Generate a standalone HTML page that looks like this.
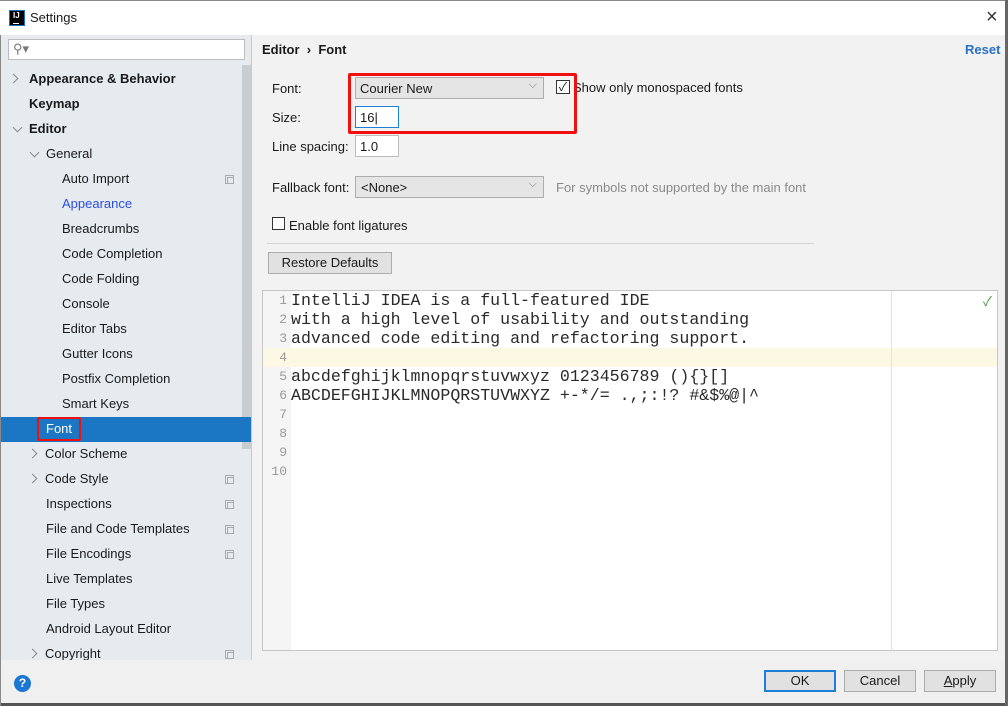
<!DOCTYPE html>
<html><head><style>
*{margin:0;padding:0;box-sizing:border-box}
body{width:1008px;height:706px;overflow:hidden;background:#fff;font-family:"Liberation Sans","Noto Sans CJK SC",sans-serif;font-size:13px;color:#1a1a1a;position:relative}
.a{position:absolute}
.title{left:0;top:0;width:1008px;height:35px;background:#fff;border-top:1px solid #888}
.left{left:0;top:35px;width:251px;height:625px;background:#e6ebf0;border-left:1px solid #888}
.right{left:251px;top:35px;width:757px;height:625px;background:#f2f2f2;border-left:1px solid #c9c9c9}
.bottom{left:0;top:660px;width:1008px;height:46px;background:#f0f0f0;border-left:1px solid #888}
.row{position:absolute;height:25px;line-height:25px;white-space:nowrap}
.arr{position:absolute;width:7px;height:7px;border-right:1.5px solid #8a8a8a;border-bottom:1.5px solid #8a8a8a}
.cp{position:absolute;left:225px;width:9px;height:9px;border:1px solid #aaa}
.cp:after{content:"";position:absolute;left:1px;top:1px;width:5px;height:5px;border:1px solid #aaa;background:#e6ebf0}
.btn{position:absolute;height:22px;border:1px solid #adadad;background:#e1e1e1;text-align:center;line-height:20px}
.mono{font-family:"Liberation Mono",monospace;font-size:16.6px;color:#2a2a2a}
.ln{position:absolute;left:263px;width:24px;text-align:right;color:#999;font-family:"Liberation Mono",monospace;font-size:13px}
</style></head><body>
<div class="a title">
 <div class="a" style="left:9px;top:9px;width:16px;height:16px;background:#000;color:#fff;font-size:8px;font-weight:bold;line-height:10px;padding-left:3px;border:1px solid #1e6fc8">IJ<div style="width:6px;height:1px;background:#fff;margin-top:2px"></div></div>
 <div class="a" style="left:30px;top:9px;font-size:13px">Settings</div>
 <div class="a" style="left:986px;top:5px;font-size:20px;color:#333;font-weight:300">×</div>
</div>
<div class="a left">
 <div class="a" style="left:7px;top:4px;width:237px;height:21px;background:#fff;border:1px solid #bcbcbc"><span class="a" style="left:4px;top:1px;color:#777;font-size:13px">&#9906;▾</span></div>
 <div class="a" style="left:241px;top:30px;width:10px;height:384px;background:#c9cdd2"></div>
</div>
<div class="a" style="left:0;top:31px;width:251px">
 <div class="arr" style="left:10px;top:44px;transform:rotate(-45deg)"></div>
 <div class="row" style="left:29px;top:35px;font-weight:bold">Appearance &amp; Behavior</div>
 <div class="row" style="left:29px;top:60px;font-weight:bold">Keymap</div>
 <div class="arr" style="left:14px;top:93px;transform:rotate(45deg)"></div>
 <div class="row" style="left:29px;top:85px;font-weight:bold">Editor</div>
 <div class="arr" style="left:31px;top:118px;transform:rotate(45deg)"></div>
 <div class="row" style="left:46px;top:110px">General</div>
 <div class="row" style="left:62px;top:135px">Auto Import</div><div class="cp" style="top:144px"></div>
 <div class="row" style="left:62px;top:160px;color:#2a4ee0">Appearance</div>
 <div class="row" style="left:62px;top:185px">Breadcrumbs</div>
 <div class="row" style="left:62px;top:210px">Code Completion</div>
 <div class="row" style="left:62px;top:235px">Code Folding</div>
 <div class="row" style="left:62px;top:260px">Console</div>
 <div class="row" style="left:62px;top:285px">Editor Tabs</div>
 <div class="row" style="left:62px;top:310px">Gutter Icons</div>
 <div class="row" style="left:62px;top:335px">Postfix Completion</div>
 <div class="row" style="left:62px;top:360px">Smart Keys</div>
 <div class="a" style="left:1px;top:386px;width:250px;height:25px;background:#1b76c4"></div>
 <div class="a" style="left:37px;top:386px;width:44px;height:24px;border:2px solid #f01010;border-radius:2px"></div>
 <div class="row" style="left:46px;top:385px;color:#fff">Font</div>
 <div class="arr" style="left:29px;top:419px;transform:rotate(-45deg)"></div>
 <div class="row" style="left:45px;top:410px">Color Scheme</div>
 <div class="arr" style="left:29px;top:444px;transform:rotate(-45deg)"></div>
 <div class="row" style="left:45px;top:435px">Code Style</div><div class="cp" style="top:444px"></div>
 <div class="row" style="left:46px;top:460px">Inspections</div><div class="cp" style="top:469px"></div>
 <div class="row" style="left:46px;top:485px">File and Code Templates</div><div class="cp" style="top:494px"></div>
 <div class="row" style="left:46px;top:510px">File Encodings</div><div class="cp" style="top:519px"></div>
 <div class="row" style="left:46px;top:535px">Live Templates</div>
 <div class="row" style="left:46px;top:560px">File Types</div>
 <div class="row" style="left:46px;top:585px">Android Layout Editor</div>
 <div class="arr" style="left:29px;top:619px;transform:rotate(-45deg)"></div>
 <div class="row" style="left:45px;top:610px">Copyright</div><div class="cp" style="top:619px"></div>
</div>
<div class="a right"></div>
<div class="a" style="left:262px;top:42px;font-weight:bold">Editor &nbsp;›&nbsp; Font</div>
<div class="a" style="left:965px;top:42px;font-weight:bold;color:#2a6fc8">Reset</div>
<div class="a" style="left:272px;top:81px">Font:</div>
<div class="a" style="left:355px;top:77px;width:189px;height:22px;border:1px solid #adadad;background:#e5e5e5;padding:3px 4px">Courier New<span class="a" style="right:6px;top:1px;color:#777;font-size:11px">⌵</span></div>
<div class="a" style="left:556px;top:80px;width:14px;height:14px;border:1px solid #333;background:#fff;font-size:12px;line-height:12px;text-align:center">✓</div>
<div class="a" style="left:573px;top:80px">Show only monospaced fonts</div>
<div class="a" style="left:272px;top:110px">Size:</div>
<div class="a" style="left:355px;top:106px;width:44px;height:22px;border:1px solid #1e7fd8;background:#fff;padding:3px 4px">16|</div>
<div class="a" style="left:348px;top:73px;width:229px;height:61px;border:3px solid #f01010;border-radius:2px"></div>
<div class="a" style="left:272px;top:139px">Line spacing:</div>
<div class="a" style="left:355px;top:135px;width:44px;height:22px;border:1px solid #bdbdbd;background:#fff;padding:3px 4px">1.0</div>
<div class="a" style="left:272px;top:180px">Fallback font:</div>
<div class="a" style="left:355px;top:176px;width:189px;height:22px;border:1px solid #adadad;background:#e5e5e5;padding:3px 5px">&lt;None&gt;<span class="a" style="right:6px;top:1px;color:#777;font-size:11px">⌵</span></div>
<div class="a" style="left:556px;top:180px;color:#8a8a8a">For symbols not supported by the main font</div>
<div class="a" style="left:272px;top:217px;width:13px;height:13px;border:1px solid #333;background:#fff"></div>
<div class="a" style="left:289px;top:218px">Enable font ligatures</div>
<div class="a" style="left:267px;top:243px;width:547px;height:1px;background:#d5d5d5"></div>
<div class="btn" style="left:268px;top:252px;width:124px">Restore Defaults</div>
<div class="a" style="left:262px;top:290px;width:736px;height:361px;background:#fff;border:1px solid #c6c6c6"></div>
<div class="a" style="left:263px;top:291px;width:28px;height:359px;background:#f5f5f5"></div>
<div class="a" style="left:263px;top:348px;width:734px;height:19px;background:#fdf8e4"></div>
<div class="a" style="left:891px;top:291px;width:1px;height:359px;background:#e2e2e2"></div>
<div class="a" style="left:983px;top:291px;color:#4a9a3a;font-size:13px">✓</div>
<div class="ln" style="top:293px">1</div><div class="ln" style="top:312px">2</div><div class="ln" style="top:331px">3</div><div class="ln" style="top:350px">4</div><div class="ln" style="top:369px">5</div><div class="ln" style="top:388px">6</div><div class="ln" style="top:407px">7</div><div class="ln" style="top:426px">8</div><div class="ln" style="top:445px">9</div><div class="ln" style="top:464px">10</div>
<div class="a mono" style="left:291px;top:291px;line-height:19px;white-space:pre">IntelliJ IDEA is a full-featured IDE
with a high level of usability and outstanding
advanced code editing and refactoring support.

abcdefghijklmnopqrstuvwxyz 0123456789 (){}[]
ABCDEFGHIJKLMNOPQRSTUVWXYZ +-*/= .,;:!? #&amp;$%@|^</div>
<div class="a bottom">
 <div class="a" style="left:13px;top:15px;width:17px;height:17px;border-radius:50%;background:#1b76d4;color:#fff;font-size:12px;font-weight:bold;text-align:center;line-height:17px">?</div>
 <div class="btn" style="left:763px;top:10px;width:72px;border:2px solid #1e7fd8;line-height:18px">OK</div>
 <div class="btn" style="left:843px;top:10px;width:72px">Cancel</div>
 <div class="btn" style="left:923px;top:10px;width:72px"><u>A</u>pply</div>
 <div class="a" style="left:0;top:43px;width:1008px;height:3px;background:#555"></div>
</div>
<div class="a" style="left:1005px;top:0;width:3px;height:706px;background:#666"></div>
</body></html>
